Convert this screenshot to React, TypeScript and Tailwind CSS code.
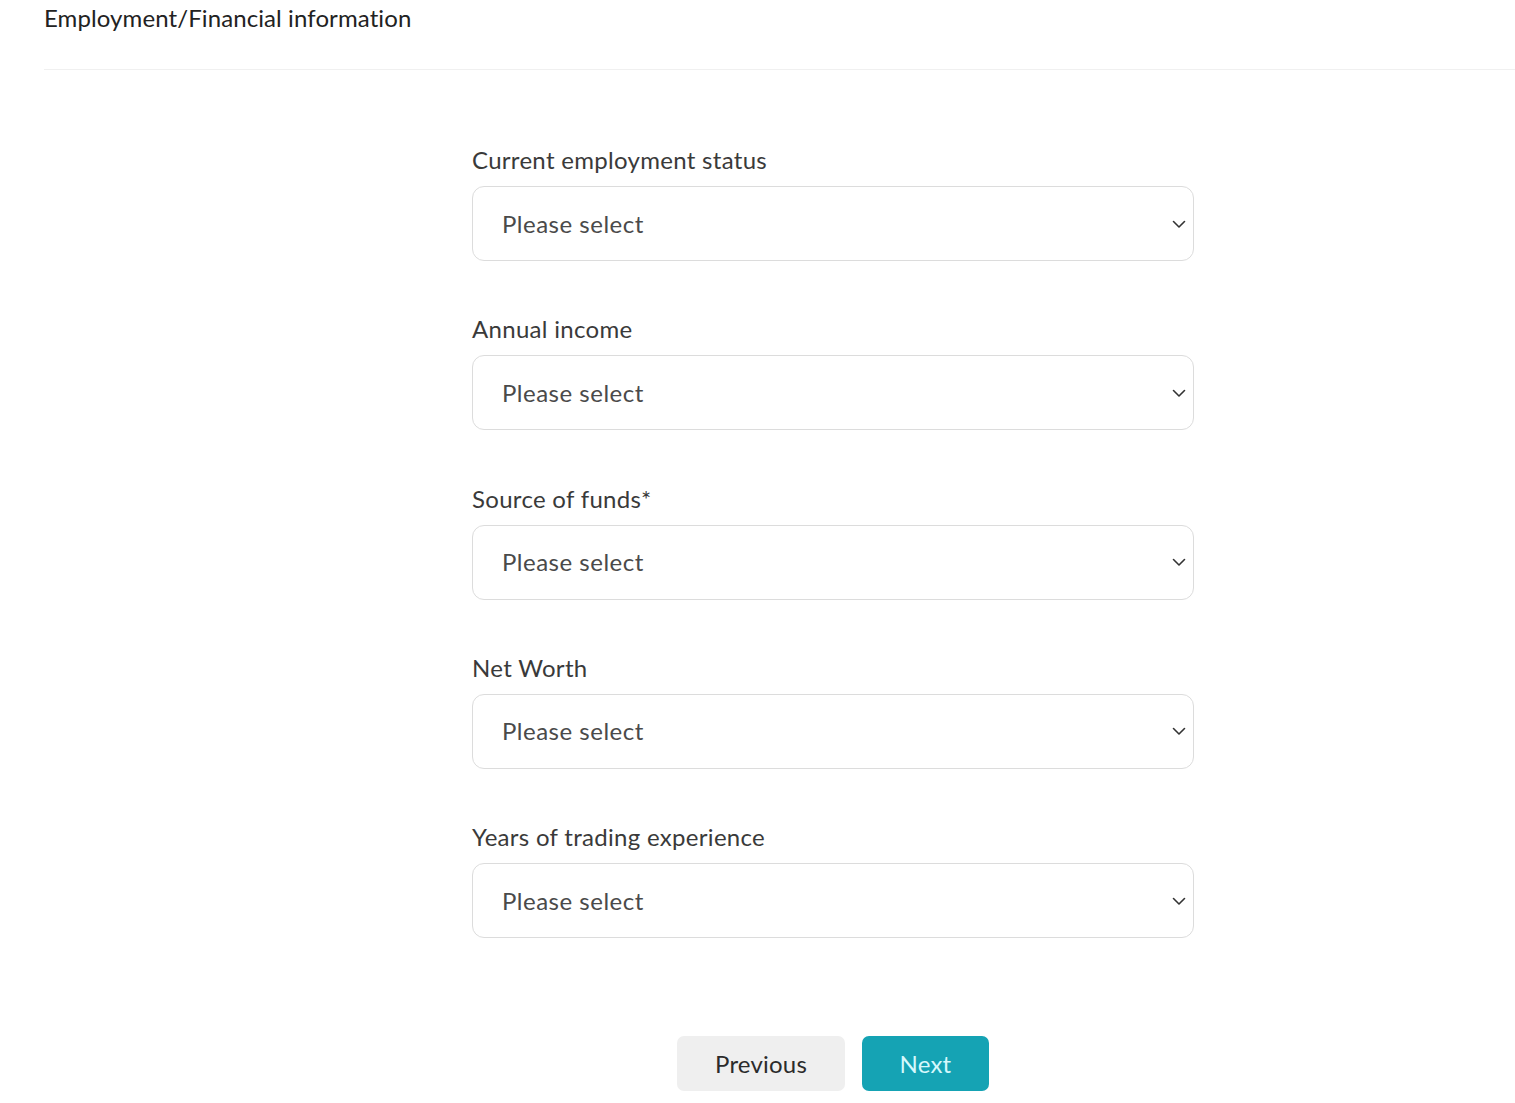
import React from "react";

const fields = [
  "Current employment status",
  "Annual income",
  "Source of funds*",
  "Net Worth",
  "Years of trading experience",
];

function Chevron() {
  return (
    <svg width="14" height="14" viewBox="0 0 14 14" fill="none" className="shrink-0">
      <path d="M1.5 4.5l5.5 5.5 5.5-5.5" stroke="#333" strokeWidth="1.6" strokeLinecap="round" strokeLinejoin="round" />
    </svg>
  );
}

export default function App() {
  return (
    <div className="min-h-screen bg-white font-['Lato','Noto_Sans',sans-serif] text-[#2b2b2b]">
      <div className="ml-[44px] h-[70px] border-b border-[#f0f0f0]">
        <h1 className="text-[24px] leading-[36px] tracking-[0.1px] font-normal text-[#222]">Employment/Financial information</h1>
      </div>
      <div className="ml-[472px] w-[722px] pt-[71px] flex flex-col">
        {fields.map((f, i) => (
          <div key={f} className={i === 0 ? "" : "mt-[49.25px]"}>
            <label className="block pt-[2px] text-[24px] leading-[33px] tracking-[0.3px] text-[#3a3a3a]">{f}</label>
            <div className="mt-[10px] h-[75px] rounded-[12px] border border-[#dcdcdc] flex items-center justify-between pl-[29px] pr-[7px]">
              <span className="text-[24px] tracking-[0.5px] text-[#4a4a4a]">Please select</span>
              <Chevron />
            </div>
          </div>
        ))}
        <div className="mt-[98px] flex justify-center gap-[17px]">
          <button className="w-[168px] h-[55px] rounded-[7px] bg-[#efefef] text-[24px] tracking-[0.2px] text-[#2b2b2b]">Previous</button>
          <button className="w-[127px] h-[55px] rounded-[7px] bg-[#15a3b4] text-[24px] tracking-[0.2px] text-[#d6f8fc]">Next</button>
        </div>
      </div>
    </div>
  );
}
